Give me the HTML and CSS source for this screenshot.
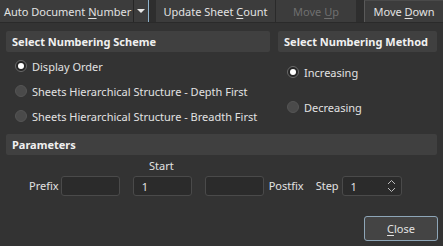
FILE: index.html
```html
<!DOCTYPE html>
<html lang="en">
<head>
    <meta charset="UTF-8">
    <title>Auto Document Number</title>
    <link rel="stylesheet" href="styles.css">
</head>
<body>
    <div class="toolbar">
        <button class="tool main-tool">Auto Document <u>N</u>umber</button>
        <button class="tool drop-tool"><span class="arrow"></span></button>
        <span class="focus-line"></span>
        <button class="tool update-tool">Update Sheet <u>C</u>ount</button>
        <button class="tool up-tool" disabled>Move <u>U</u>p</button>
        <button class="tool down-tool">Move <u>D</u>own</button>
    </div>

    <div class="panel">
        <div class="top-row">
            <div class="scheme">
                <div class="section-head">Select Numbering Scheme</div>
                <div class="scheme-list">
                    <label class="radio-row"><span class="radio checked"></span>Display Order</label>
                    <label class="radio-row"><span class="radio"></span>Sheets Hierarchical Structure - Depth First</label>
                    <label class="radio-row"><span class="radio"></span>Sheets Hierarchical Structure - Breadth First</label>
                </div>
            </div>
            <div class="method">
                <div class="section-head">Select Numbering Method</div>
                <div class="method-list">
                    <label class="radio-row"><span class="radio checked"></span>Increasing</label>
                    <label class="radio-row"><span class="radio"></span>Decreasing</label>
                </div>
            </div>
        </div>

        <div class="section-head params-head">Parameters</div>
        <div class="params">
            <div class="start-label">Start</div>
            <div class="param-row">
                <span class="lbl prefix-lbl">Prefix</span>
                <span class="field"></span>
                <span class="field">1</span>
                <span class="field last-field"></span>
                <span class="lbl postfix-lbl">Postfix</span>
                <span class="lbl step-lbl">Step</span>
                <span class="field spin">1
                    <svg class="spin-arrows" width="9" height="14" viewBox="0 0 9 14">
                        <path d="M1 5 L4.5 1.5 L8 5" fill="none" stroke="#bdbdbd" stroke-width="1"/>
                        <path d="M1 9 L4.5 12.5 L8 9" fill="none" stroke="#bdbdbd" stroke-width="1"/>
                    </svg>
                </span>
            </div>
        </div>

        <div class="footer">
            <button class="close-btn"><u>C</u>lose</button>
        </div>
    </div>
</body>
</html>
```

FILE: styles.css
```css
body {
    margin: 0;
    background-color: #333333;
    color: #e2e2e2;
    font-family: "Noto Sans", "Open Sans", sans-serif;
    font-size: 11px;
    width: 443px;
    height: 246px;
    overflow: hidden;
}
button {
    font-family: inherit;
    font-size: inherit;
    color: inherit;
}
u {
    text-decoration-thickness: 1px;
    text-underline-offset: 2px;
}
.toolbar {
    display: flex;
    height: 22px;
    background-color: #2e2e2e;
    border-bottom: 1px solid #2a2a2a;
}
.tool {
    background-color: #3c3c3c;
    border: none;
    padding: 0 4px;
    height: 22px;
    white-space: nowrap;
}
.main-tool {
    width: 134px;
    text-align: left;
    padding-left: 4px;
    border-right: 1px solid #262626;
}
.drop-tool {
    width: 14px;
    padding: 0;
    display: flex;
    align-items: center;
    justify-content: center;
}
.arrow {
    width: 0;
    height: 0;
    border-left: 4px solid transparent;
    border-right: 4px solid transparent;
    border-top: 4px solid #e8e8e8;
}
.focus-line {
    width: 1px;
    background-color: #8fb3cc;
    margin-right: 7px;
}
.update-tool {
    width: 120px;
    border-right: 1px solid #2a2a2a;
}
.up-tool {
    width: 80px;
    color: #6f6f6f;
    margin-right: 8px;
}
.down-tool {
    flex: 1;
    border-left: 1px solid #5a5a5a;
    border-top: 1px solid #4a4a4a;
}
.panel {
    padding: 8px 6px 0 6px;
}
.top-row {
    display: flex;
    gap: 8px;
}
.scheme {
    width: 264px;
}
.method {
    width: 159px;
}
.section-head {
    background-color: #404040;
    height: 21px;
    line-height: 21px;
    padding-left: 6px;
    font-weight: bold;
    color: #f0f0f0;
    border-radius: 2px;
}
.scheme-list {
    display: flex;
    flex-direction: column;
    gap: 5px;
    padding: 4px 0 0 9px;
}
.method-list {
    display: flex;
    flex-direction: column;
    gap: 15px;
    padding: 10px 0 0 9px;
}
.radio-row {
    display: flex;
    align-items: center;
    height: 20px;
    gap: 5px;
}
.radio {
    width: 10px;
    height: 10px;
    border-radius: 50%;
    background-color: #4a4a4a;
    border: 1px solid #555555;
    box-sizing: content-box;
    display: flex;
    align-items: center;
    justify-content: center;
}
.radio.checked {
    background-color: #262626;
    border-color: #6a6a6a;
}
.radio.checked::after {
    content: "";
    width: 6px;
    height: 6px;
    border-radius: 50%;
    background-color: #ffffff;
}
.params-head {
    margin-top: 8px;
}
.params {
    height: 56px;
}
.start-label {
    padding-left: 143px;
    height: 18px;
    line-height: 18px;
    margin-top: 2px;
}
.param-row {
    display: flex;
    align-items: center;
    height: 21px;
}
.lbl {
    white-space: nowrap;
}
.prefix-lbl {
    margin-left: 23px;
    margin-right: 2px;
}
.field {
    width: 59px;
    height: 20px;
    line-height: 19px;
    background-color: #2b2b2b;
    border: 1px solid #4a4a4a;
    border-radius: 3px;
    padding-left: 8px;
    box-sizing: border-box;
    margin-right: 13px;
    position: relative;
}
.last-field {
    margin-right: 5px;
}
.postfix-lbl {
    margin-right: 12px;
}
.step-lbl {
    margin-right: 3px;
}
.spin {
    width: 60px;
    margin-right: 0;
}
.spin-arrows {
    position: absolute;
    right: 5px;
    top: 2px;
}
.footer {
    display: flex;
    justify-content: flex-end;
    margin-right: -1px;
    margin-top: 3px;
}
.close-btn {
    width: 74px;
    height: 25px;
    background-color: #444444;
    border: 1px solid #8ea6b8;
    border-radius: 3px;
}
```
